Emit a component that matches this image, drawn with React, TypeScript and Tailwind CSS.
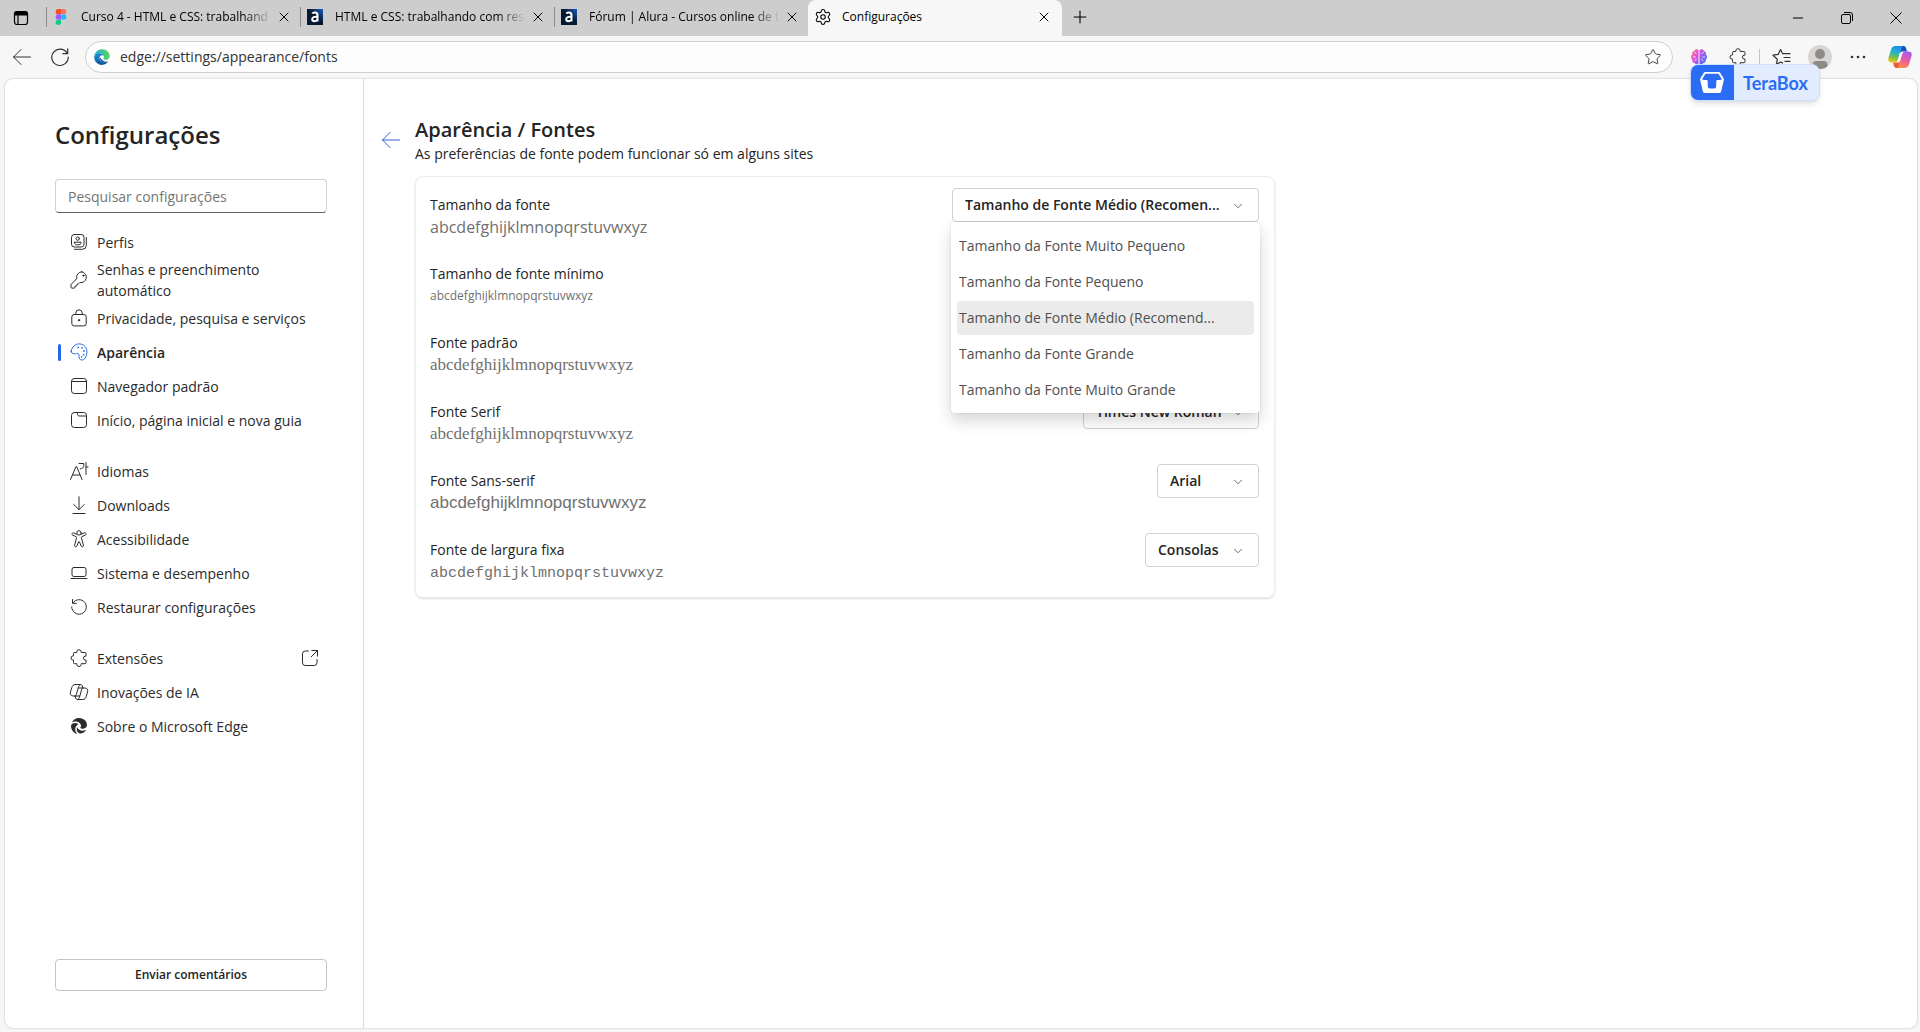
import type { ReactNode } from "react";
import { ArrowLeft, ChevronDown, Minus, Plus, Settings, Star, X } from "lucide-react";
import { FaEdge } from "react-icons/fa6";

function Glyph({ children, className = "size-5" }: { children: ReactNode; className?: string }) {
  return (
    <svg
      viewBox="0 0 20 20"
      className={`shrink-0 ${className}`}
      fill="none"
      stroke="currentColor"
      strokeWidth={1}
      strokeLinecap="round"
      strokeLinejoin="round"
      aria-hidden="true"
    >
      {children}
    </svg>
  );
}

const icons = {
  profiles: (
    <>
      <rect x="2.5" y="2.5" width="12.5" height="12.5" rx="2.8" />
      <path d="M17.3 5.5v7.8a4 4 0 0 1-4 4H5.5" />
      <circle cx="8.75" cy="6.6" r="1.7" />
      <path d="M5.4 10.2h6.7v.6c0 1.3-1.4 2.1-3.35 2.1s-3.35-.8-3.35-2.1z" />
    </>
  ),
  key: (
    <>
      <path d="M12.9 1.8a5.3 5.3 0 0 0-5.1 6.9l-5.5 5.5a1 1 0 0 0-.3.7v2.3c0 .5.4.9.9.9h2.2c.5 0 .9-.4.9-.9v-1.1h1.1c.5 0 .9-.4.9-.9v-1.1h.9c.3 0 .5-.1.7-.3l1.2-1.2a5.3 5.3 0 1 0 2.1-10.8z" />
      <circle cx="14.4" cy="5.6" r=".6" fill="currentColor" />
    </>
  ),
  lock: (
    <>
      <rect x="2.8" y="6.5" width="14.4" height="11.4" rx="2.4" />
      <path d="M6.8 6.3V5a3.2 3.2 0 0 1 6.4 0v1.3" />
      <circle cx="10" cy="12.2" r=".7" fill="currentColor" />
    </>
  ),
  palette: (
    <>
      <path d="M2.1 9.2C3 4.900 6.100 1.700 10.500 1.900c4.500.2 7.700 3.800 7.400 8.600-.3 4.400-2.400 7.600-5 7.500-2.100-.1-3-1.600-2.900-3.400.1-1.500.1-2.600-1-3.100-1.100-.5-1.900.6-3.500.3-2-.3-3.700-1-3.400-2.600z" />
      <g fill="currentColor" stroke="none">
        <circle cx="9.300" cy="5.300" r=".9" />
        <circle cx="13" cy="5.800" r=".9" />
        <circle cx="14.900" cy="9" r=".9" />
        <circle cx="14.600" cy="12.600" r=".9" />
        <circle cx="12.600" cy="14.900" r=".8" />
      </g>
    </>
  ),
  browser: (
    <>
      <rect x="2.5" y="2.500" width="15" height="15" rx="2.8" />
      <path d="M2.500 5.500h15" />
    </>
  ),
  tab: (
    <>
      <rect x="2.500" y="2.500" width="15" height="15" rx="2.8" />
      <path d="M8 2.500l.6 2.200c.2.800.700 1.300 1.500 1.300h7.200" />
    </>
  ),
  languages: (
    <>
      <path d="M1.500 18.500l5.500-13h.6l5.400 13M3.500 14h7.600" />
      <path d="M10 2.500h4.800v1.700c0 2.300-1.300 3.500-3.600 3.800M17 1.500v12M17 6h2" />
    </>
  ),
  download: <path d="M10 1.800v12.700M4.800 9.500l5.200 5.200 5.200-5.200M4 18.500h12" />,
  accessibility: (
    <>
      <circle cx="10" cy="3.900" r="2.200" />
      <path d="M7.900 5.300L4.700 3.900a1.200 1.200 0 0 0-1 2.200l3.500 1.600c.4.200.5.500.4.900l-2 7.600a1.200 1.200 0 0 0 2.300.8L9.500 13c.2-.5.800-.5 1 0l1.600 4a1.200 1.200 0 0 0 2.300-.8l-2-7.600c-.1-.4 0-.7.400-.9l3.500-1.600a1.200 1.200 0 0 0-1-2.200l-3.200 1.400" />
    </>
  ),
  laptop: (
    <>
      <rect x="3" y="4.500" width="14" height="9" rx="1.800" />
      <path d="M2 15.500h16" />
    </>
  ),
  reset: (
    <>
      <path d="M3.900 5.900a7.300 7.300 0 1 1-1.200 4.100" />
      <path d="M3.500 2.500v3.800h3.900" />
    </>
  ),
  puzzle: (
    <path d="M5.500 4.500h2.300v-.6a2.200 2.200 0 0 1 4.400 0v.6h3.800a1 1 0 0 1 1 1v2.700h-.7a1.900 1.900 0 0 0 0 3.800h.7v2.700a1 1 0 0 1-1 1h-3.800v.6a2.200 2.200 0 0 1-4.400 0v-.6H5.500a1 1 0 0 1-1-1v-2.600h-.4a2.100 2.100 0 0 1 0-4.200h.4V5.500a1 1 0 0 1 1-1z" />
  ),
  copilot: (
    <>
      <path d="M6.200 2.500h5.300c.9 0 1.500.5 1.800 1.300l.6 2.200h1.700c2.700 0 3.600 1.600 2.900 4.100l-1.300 4.400c-.6 2-1.600 3-3.400 3H8.500c-.9 0-1.500-.5-1.800-1.300L6.100 14H4.400c-2.700 0-3.600-1.600-2.900-4.100l1.300-4.400c.6-2 1.600-3 3.400-3z" />
      <path d="M11.300 2.700c-1 .3-1.500 1.100-1.800 2.200L7.300 12.700c-.3.900-.7 1.300-1.400 1.300M8.700 17.300c1-.3 1.500-1.100 1.800-2.200l2.200-7.800c.3-.9.700-1.300 1.400-1.300M9.500 6h4.300M6.200 14h4.500" />
    </>
  ),
  external: (
    <path d="M8.500 3H5.200A2.700 2.700 0 0 0 2.500 5.700v9.100a2.700 2.700 0 0 0 2.700 2.700h9.100a2.700 2.700 0 0 0 2.700-2.700v-3.300M11.800 2.500h5.700v5.700M17.300 2.700l-6 6" />
  ),
};

type Item = { label: string; icon: ReactNode; active?: boolean; external?: boolean };

const groups: Item[][] = [
  [
    { label: "Perfis", icon: <Glyph>{icons.profiles}</Glyph> },
    { label: "Senhas e preenchimento automático", icon: <Glyph>{icons.key}</Glyph> },
    { label: "Privacidade, pesquisa e serviços", icon: <Glyph>{icons.lock}</Glyph> },
    { label: "Aparência", icon: <Glyph className="size-5 text-[#2869eb]">{icons.palette}</Glyph>, active: true },
    { label: "Navegador padrão", icon: <Glyph>{icons.browser}</Glyph> },
    { label: "Início, página inicial e nova guia", icon: <Glyph>{icons.tab}</Glyph> },
  ],
  [
    { label: "Idiomas", icon: <Glyph>{icons.languages}</Glyph> },
    { label: "Downloads", icon: <Glyph>{icons.download}</Glyph> },
    { label: "Acessibilidade", icon: <Glyph>{icons.accessibility}</Glyph> },
    { label: "Sistema e desempenho", icon: <Glyph>{icons.laptop}</Glyph> },
    { label: "Restaurar configurações", icon: <Glyph>{icons.reset}</Glyph> },
  ],
  [
    { label: "Extensões", icon: <Glyph>{icons.puzzle}</Glyph>, external: true },
    { label: "Inovações de IA", icon: <Glyph>{icons.copilot}</Glyph> },
    { label: "Sobre o Microsoft Edge", icon: <FaEdge className="mx-0.5 size-4 shrink-0" /> },
  ],
];

function FigmaLogo() {
  return (
    <svg viewBox="0 0 12 18" className="h-4 w-4 shrink-0" aria-hidden="true">
      <path d="M3 0h3v6H3a3 3 0 0 1 0-6z" fill="#f24e1e" />
      <path d="M6 0h3a3 3 0 0 1 0 6H6z" fill="#ff7262" />
      <path d="M3 6h3v6H3a3 3 0 0 1 0-6z" fill="#a259ff" />
      <circle cx="9" cy="9" r="3" fill="#1abcfe" />
      <path d="M3 12h3v3a3 3 0 1 1-3-3z" fill="#0acf83" />
    </svg>
  );
}

function AluraLogo() {
  return (
    <svg viewBox="0 0 16 16" className="size-4 shrink-0" aria-hidden="true">
      <defs>
        <linearGradient id="alura" x1="0" y1="1" x2="1" y2="0">
          <stop offset=".55" stopColor="#051933" />
          <stop offset="1" stopColor="#1c5fc4" />
        </linearGradient>
      </defs>
      <rect width="16" height="16" fill="url(#alura)" />
      <path
        d="M5.300 4.600C6 3.400 10.500 2.600 10.500 6v6.600M10.400 7.800c-3-.3-5.200.3-5.200 2.400 0 2.600 4.300 2.600 5.200.3"
        fill="none"
        stroke="#fff"
        strokeWidth="2"
      />
    </svg>
  );
}

function BrainIcon() {
  return (
    <svg viewBox="0 0 20 20" className="size-5" aria-hidden="true">
      <defs>
        <linearGradient id="brain" x1="0" y1="0" x2="1" y2=".6">
          <stop offset="0" stopColor="#ff8a5c" />
          <stop offset=".4" stopColor="#e84fd8" />
          <stop offset="1" stopColor="#4a6cf7" />
        </linearGradient>
      </defs>
      <path
        d="M9.500 3.500C8.500 1.500 5.500 2 5.300 4 3.300 4.200 2.600 6 3.300 7.500 1.500 8.500 1.500 11.500 3.300 12.500 2.800 14.500 4 16 5.800 16c.8 2 3 2 3.700.6zM10.500 3.500c1-2 4-1.500 4.200.5 2 .2 2.700 2 2 3.500 1.800 1 1.800 4 0 5 .5 2-.7 3.500-2.500 3.500-.8 2-3 2-3.700.6z"
        fill="url(#brain)"
      />
      <path
        d="M5.300 5.500c1 0 1.700.6 1.700 1.500M3.800 10h3M6 14c0-1 .7-1.700 1.700-1.700M14.700 5.500c-1 0-1.700.6-1.700 1.500M16.200 10h-3M14 14c0-1-.7-1.700-1.700-1.700"
        fill="none"
        stroke="#f7e9ff"
        strokeWidth=".9"
      />
    </svg>
  );
}

function CopilotLogo() {
  return (
    <svg viewBox="0 0 24 24" className="size-6" aria-hidden="true">
      <defs>
        <linearGradient id="cp-left" x1=".5" y1="0" x2=".3" y2="1">
          <stop offset="0" stopColor="#1c8df0" />
          <stop offset=".4" stopColor="#25b5c8" />
          <stop offset=".7" stopColor="#7bc043" />
          <stop offset="1" stopColor="#f5c518" />
        </linearGradient>
        <linearGradient id="cp-right" x1=".6" y1="0" x2=".3" y2="1">
          <stop offset="0" stopColor="#a45df0" />
          <stop offset=".5" stopColor="#ec5a9c" />
          <stop offset="1" stopColor="#ff8f4a" />
        </linearGradient>
      </defs>
      <path d="M13.500 1h2.200c1.200 0 1.900.7 2.300 2l1 3.500h-4.500c-1.800 0-2.500 1-3 2.600z" fill="#1b4fc4" />
      <path d="M10.500 23H8.300c-1.200 0-1.900-.7-2.300-2l-1-3.500h4.500c1.800 0 2.500-1 3-2.600z" fill="#ef5a32" />
      <path d="M7.500 1h8c-1.300 0-2 1-2.500 2.700L9.700 15c-.5 1.600-1.300 2.500-3 2.500H3.500C.8 17.500-.3 15.500.6 12.500L3 4.700C3.800 2.200 5.100 1 7.500 1z" fill="url(#cp-left)" />
      <path d="M16.500 23h-8c1.300 0 2-1 2.500-2.700L14.300 9c.5-1.600 1.300-2.500 3-2.500h3.200c2.700 0 3.800 2 2.900 5L21 19.300c-.8 2.500-2.100 3.700-4.500 3.700z" fill="url(#cp-right)" />
    </svg>
  );
}

function EdgeLogo() {
  return (
    <svg viewBox="0 0 16 16" className="size-4 shrink-0" aria-hidden="true">
      <defs>
        <linearGradient id="edge-top" x1="0" y1=".5" x2="1" y2=".4">
          <stop offset="0" stopColor="#2aa5dd" />
          <stop offset=".45" stopColor="#35c39a" />
          <stop offset="1" stopColor="#5fd84f" />
        </linearGradient>
        <linearGradient id="edge-body" x1="0" y1="0" x2=".6" y2="1">
          <stop offset="0" stopColor="#1e96dc" />
          <stop offset="1" stopColor="#0c4f94" />
        </linearGradient>
      </defs>
      <path d="M.3 7C.9 3 4 .2 8 .2c4.800 0 7.800 3.500 7.800 6.800 0 2.300-1.600 3.700-3.700 3.700-1.700 0-2.700-.7-2.700-1.300 0-.5.600-.700.600-1.900C10 5.800 8.300 4.300 5.900 4.300 3.300 4.300 1.200 5.300.3 7z" fill="url(#edge-top)" />
      <path d="M.2 8C.3 5.700 2.800 4.300 5.600 4.300c2.200 0 3.900 1.200 4.300 2.500-.6-.5-1.300-.7-1.900-.6-1.600.2-2.600 1.500-2.500 3.200.2 2.400 2.700 4.200 5.500 4.100 1.300 0 2.400-.4 3.300-.9C12.900 14.600 10.700 15.900 8 15.900 3.500 15.900.1 12.300.2 8z" fill="url(#edge-body)" />
      <path d="M6.200 8.500c-.6 1.800.2 3.900 2.300 4.800 2 .9 4.300.3 5.800-.8-2.800.6-6.300-.6-8.100-4z" fill="#1a5ea8" />
    </svg>
  );
}

const tabs = [
  { title: "Curso 4 - HTML e CSS: trabalhand", logo: <FigmaLogo /> },
  { title: "HTML e CSS: trabalhando com res", logo: <AluraLogo /> },
  { title: "Fórum | Alura - Cursos online de t", logo: <AluraLogo /> },
];

function TabBar() {
  return (
    <header className="flex h-9 items-stretch bg-[#cdcdcd] text-xs text-black">
      <button aria-label="Menu de guias" className="flex w-[46px] items-center justify-center pr-1">
        <svg viewBox="0 0 16 16" className="size-4" fill="none" stroke="currentColor" aria-hidden="true">
          <rect x="1.500" y="1.500" width="13" height="13" rx="2.500" strokeWidth="1.200" />
          <path d="M1.500 5V4A2.500 2.500 0 0 1 4 1.500h8A2.500 2.500 0 0 1 14.500 4v1z" fill="currentColor" />
          <path d="M5 5v9.500" strokeWidth="1.200" />
        </svg>
      </button>
      {tabs.map((tab) => (
        <div key={tab.title} className="flex w-[254px] items-center pb-0.5">
          <span className="h-5 w-px bg-[#8c8c8c]" />
          <button className="flex min-w-0 flex-1 items-center gap-3 pl-1.5">
            {tab.logo}
            <span className="flex-1 text-left whitespace-nowrap [mask-image:linear-gradient(to_right,black_85%,transparent)]">
              {tab.title}
            </span>
          </button>
          <button aria-label="Fechar guia" className="flex w-7 shrink-0 items-center justify-center pr-1">
            <X className="size-4" strokeWidth={1.5} />
          </button>
        </div>
      ))}
      <div className="flex w-[254px] items-center rounded-t-lg bg-[#f7f7f7] pb-0.5">
        <button className="flex min-w-0 flex-1 items-center gap-2.5 pl-1.5">
          <Settings className="size-[18px] shrink-0" strokeWidth={1.4} />
          <span className="flex-1 text-left">Configurações</span>
        </button>
        <button aria-label="Fechar guia" className="flex w-8 shrink-0 items-center justify-center pr-1">
          <X className="size-4" strokeWidth={1.5} />
        </button>
      </div>
      <button aria-label="Nova guia" className="flex w-9 items-center justify-center pb-0.5">
        <Plus className="size-5" strokeWidth={1.3} />
      </button>
      <div className="ml-auto flex">
        <button aria-label="Minimizar" className="flex w-[49px] items-center justify-center">
          <Minus className="size-4" strokeWidth={1.500} />
        </button>
        <button aria-label="Restaurar" className="flex w-[49px] items-center justify-center">
          <svg viewBox="0 0 12 12" className="size-3" fill="none" stroke="currentColor" aria-hidden="true">
            <rect x=".5" y="2.500" width="9" height="9" rx="1.500" />
            <path d="M3 .500h6a2.500 2.500 0 0 1 2.500 2.500v6" />
          </svg>
        </button>
        <button aria-label="Fechar" className="flex w-[49px] items-center justify-center">
          <svg viewBox="0 0 12 12" className="size-3" fill="none" stroke="currentColor" aria-hidden="true">
            <path d="M.5.5l11 11M11.500.5l-11 11" />
          </svg>
        </button>
      </div>
    </header>
  );
}

function Toolbar() {
  return (
    <div className="flex h-[43px] items-center pb-0.5 text-[#333]">
      <button aria-label="Voltar" className="flex w-[43px] items-center justify-center">
        <Glyph>
          <path d="M18.500 10h-17M9 2.500L1.500 10 9 17.500" />
        </Glyph>
      </button>
      <button aria-label="Atualizar" className="flex w-[34px] items-center justify-center">
        <Glyph>
          <path d="M17.300 6.500A8.200 8.200 0 1 0 18.200 10M17.700 1.800v4.900h-4.900" strokeWidth="1.200" />
        </Glyph>
      </button>
      <div className="ml-2 flex h-8 flex-1 items-center rounded-full border border-[#cfcfcf] bg-[#fdfdfd] px-2">
        <EdgeLogo />
        <input
          aria-label="Barra de endereços"
          defaultValue="edge://settings/appearance/fonts"
          className="ml-2.5 min-w-0 flex-1 bg-transparent text-sm text-[#333] outline-none"
        />
        <button aria-label="Adicionar aos favoritos" className="pr-0.5">
          <Star className="size-[18px]" strokeWidth={1.2} />
        </button>
      </div>
      <div className="flex items-center pl-4 pr-2">
        <button aria-label="Extensão">
          <BrainIcon />
        </button>
        <button aria-label="Extensões" className="ml-[19px]">
          <Glyph>{icons.puzzle}</Glyph>
        </button>
        <span className="mx-[11px] h-4 w-px bg-[#c4c4c4]" />
        <button aria-label="Favoritos">
          <Glyph>
            <path d="M11.500 6.700h7.500M13 10.500h6M14 14.300h5M5.500 17.300l.8-5.100L2 8.200l5.200-.8L9.500 2.500l1.500 3.100M5.500 17.300l4.200-2.300 1.800 1" strokeWidth="1.200" />
          </Glyph>
        </button>
        <button aria-label="Perfil" className="ml-[17px] size-6 overflow-hidden rounded-full bg-[#d8d6d5]">
          <svg viewBox="0 0 24 24" aria-hidden="true">
            <circle cx="12" cy="9" r="5" fill="#8d8a88" />
            <path d="M4.500 24v-4c0-2.500 1.500-4 4-4h7c2.500 0 4 1.500 4 4v4z" fill="#8d8a88" />
          </svg>
        </button>
        <button aria-label="Mais opções" className="ml-4">
          <Glyph>
            <g fill="currentColor" stroke="none">
              <circle cx="4" cy="10" r="1.300" />
              <circle cx="10" cy="10" r="1.300" />
              <circle cx="16" cy="10" r="1.300" />
            </g>
          </Glyph>
        </button>
        <button aria-label="Copilot" className="ml-5">
          <CopilotLogo />
        </button>
      </div>
    </div>
  );
}

function Sidebar() {
  return (
    <aside className="flex w-[359px] shrink-0 flex-col border-r border-[#dcdcdc] pr-9 pb-[37px] pl-[50px]">
      <h1 className="mt-10 text-2xl leading-8 font-semibold text-[#242424]">Configurações</h1>
      <input
        type="search"
        aria-label="Pesquisar configurações"
        placeholder="Pesquisar configurações"
        className="mt-7 h-[34px] w-full rounded border border-[#d1d1d1] border-b-[#616161] px-3 text-sm outline-none placeholder:text-[#757575]"
      />
      <nav className="mt-3 flex flex-col gap-[17px] text-sm text-[#2b2b2b]">
        {groups.map((group, i) => (
          <ul key={i}>
            {group.map((item) => (
              <li key={item.label}>
                <a href="#" className="relative flex min-h-[34px] items-center gap-2 pr-[7px] pl-3.5 leading-[21px]">
                  {item.active && <span className="absolute left-[3px] h-[17px] w-[3px] rounded-full bg-[#2869eb]" />}
                  {item.icon}
                  <span className={item.active ? "flex-1 font-semibold text-[#1f1f1f]" : "flex-1"}>{item.label}</span>
                  {item.external && <Glyph>{icons.external}</Glyph>}
                </a>
              </li>
            ))}
          </ul>
        ))}
      </nav>
      <button className="mt-auto h-8 rounded border border-[#c4c4c4] text-xs font-semibold text-[#242424]">
        Enviar comentários
      </button>
    </aside>
  );
}

function FontSelect({ id, value }: { id: string; value: string }) {
  return (
    <>
      <select
        id={id}
        className="h-[34px] w-full appearance-none rounded border border-[#d1d1d1] bg-white pr-8 pl-3 text-sm font-semibold text-[#242424] outline-none"
      >
        <option>{value}</option>
      </select>
      <ChevronDown
        className="pointer-events-none absolute top-[11px] right-3.5 size-3.5 text-[#555]"
        strokeWidth={1.500}
      />
    </>
  );
}

const sizes = [
  "Tamanho da Fonte Muito Pequeno",
  "Tamanho da Fonte Pequeno",
  "Tamanho de Fonte Médio (Recomend...",
  "Tamanho da Fonte Grande",
  "Tamanho da Fonte Muito Grande",
];

function SizeMenu() {
  return (
    <ul
      role="listbox"
      aria-label="Tamanho da fonte"
      className="absolute inset-x-[-1px] top-full z-10 flex flex-col gap-0.5 rounded bg-white px-1.5 pt-[7px] pb-1.5 text-sm text-[#505050] shadow-[0_8px_16px_rgba(0,0,0,0.16),0_0_2px_rgba(0,0,0,0.14)]"
    >
      {sizes.map((size, i) => (
        <li
          key={size}
          role="option"
          aria-selected={i === 2}
          className={
            i === 2
              ? "flex h-[34px] items-center rounded bg-[#ebebeb] px-0.5 whitespace-nowrap"
              : "flex h-[34px] items-center px-0.5 whitespace-nowrap"
          }
        >
          {size}
        </li>
      ))}
    </ul>
  );
}

const rows = [
  { id: "size", label: "Tamanho da fonte", sample: "text-base", value: "Tamanho de Fonte Médio (Recomen...", width: "w-[307px]", open: true },
  { id: "min", label: "Tamanho de fonte mínimo", sample: "text-xs" },
  { id: "standard", label: "Fonte padrão", sample: "font-['Liberation_Serif',serif] text-[17px]" },
  { id: "serif", label: "Fonte Serif", sample: "font-['Liberation_Serif',serif] text-[17px]", value: "Times New Roman", width: "w-[176px]" },
  { id: "sans", label: "Fonte Sans-serif", sample: "font-['Liberation_Sans',sans-serif] text-[17px]", value: "Arial", width: "w-[102px]" },
  { id: "mono", label: "Fonte de largura fixa", sample: "font-['Liberation_Mono',monospace] pt-0.5 text-[15px]", value: "Consolas", width: "w-[114px]" },
];

function FontsPage() {
  return (
    <main className="flex min-w-0 flex-1 items-start gap-3.5 pt-[37px] pr-4 pl-[17px]">
      <button aria-label="Voltar" className="mt-3.5 text-[#2f62cf]">
        <Glyph>
          <path d="M18.500 10h-17M9 2.500L1.500 10 9 17.500" />
        </Glyph>
      </button>
      <div className="max-w-[860px] min-w-0 flex-1">
        <h2 className="text-xl leading-7 font-semibold text-[#242424]">Aparência / Fontes</h2>
        <p className="text-sm leading-5 text-[#242424]">As preferências de fonte podem funcionar só em alguns sites</p>
        <section className="mt-3 flex flex-col gap-4 rounded-lg border border-[#ececec] py-[11px] pr-[15px] pl-3.5 shadow-[0_1px_2px_rgba(0,0,0,0.14)]">
          {rows.map((row) => (
            <div key={row.id} className="flex h-[53px] items-start justify-between">
              <div className="pt-[7px]">
                <label htmlFor={row.id} className="block text-sm leading-5 text-[#242424]">
                  {row.label}
                </label>
                <p className={`leading-6 text-[#707070] ${row.sample}`}>abcdefghijklmnopqrstuvwxyz</p>
              </div>
              {row.value && (
                <div className={`relative ${row.width}`}>
                  <FontSelect id={row.id} value={row.value} />
                  {row.open && <SizeMenu />}
                </div>
              )}
            </div>
          ))}
        </section>
      </div>
    </main>
  );
}

function TeraBoxBadge() {
  return (
    <button className="absolute top-16 right-[100px] z-20 flex h-[37px] w-[130px] overflow-hidden rounded-lg border border-[#cfdffd] bg-[#e2ecfe] shadow-md">
      <span className="-m-px flex w-11 items-center justify-center self-stretch bg-[#2a6df4]">
        <svg viewBox="0 0 24 21" className="h-[21px] w-6" aria-hidden="true">
          <path d="M5.500 0h13c1 0 1.500.4 2 1.200l2.900 4.800c.5.800.6 1.300.4 2.200L21.300 19c-.4 1.400-1 2-2.500 2H5.200c-1.500 0-2.100-.6-2.500-2L.2 8.200C0 7.300.1 6.800.6 6l2.900-4.800C4 .4 4.500 0 5.500 0z" fill="#fff" />
          <path d="M5.600 1.800h12.800l3.400 5.300c-.5.700-1.200 1-2.300 1h-2.600c-.4 0-.5.300-.5.700l-.3 6c-.1 1.200-.6 1.700-1.800 1.700H9.700c-1.200 0-1.700-.5-1.800-1.700l-.3-6c0-.4-.1-.7-.5-.7H4.500c-1.100 0-1.800-.3-2.300-1z" fill="#2a6df4" />
        </svg>
      </span>
      <span className="flex-1 self-center pr-px text-center font-['Lato',sans-serif] text-lg leading-6 font-bold text-[#2a6df4]">
        TeraBox
      </span>
    </button>
  );
}

export default function App() {
  return (
    <div className="relative flex h-screen flex-col bg-[#f7f7f7] font-['Open_Sans',sans-serif]">
      <TabBar />
      <Toolbar />
      <div className="mr-[3px] mb-1 ml-[5px] flex min-h-0 flex-1 overflow-hidden rounded-lg bg-white shadow-[0_0_2px_rgba(0,0,0,0.3)]">
        <Sidebar />
        <FontsPage />
      </div>
      <TeraBoxBadge />
    </div>
  );
}
